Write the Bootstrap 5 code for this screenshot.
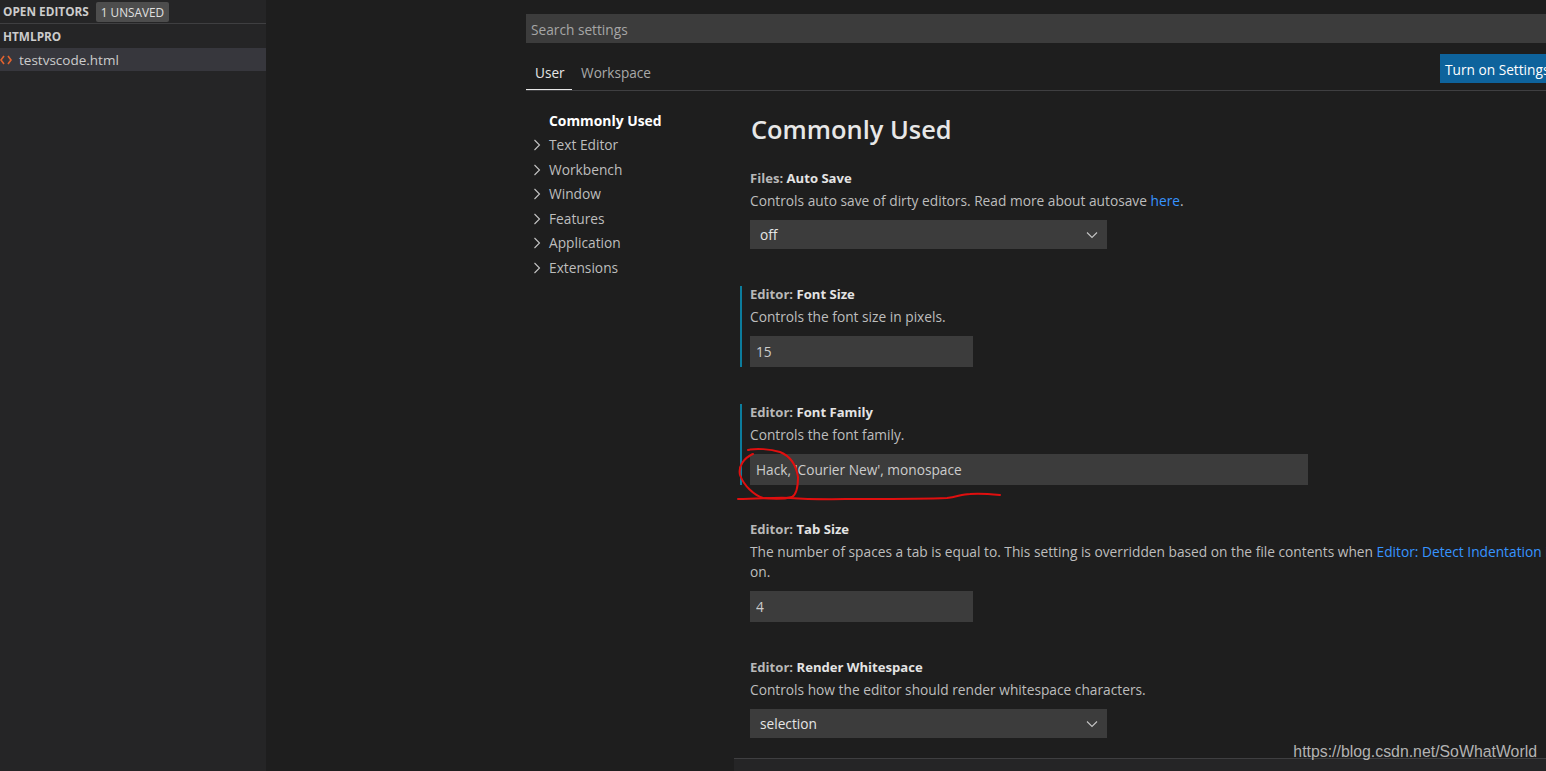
<!DOCTYPE html>
<html lang="en">
<head>
    <meta charset="UTF-8">
    <meta name="viewport" content="width=device-width, initial-scale=1.0">
    <title>Settings - VS Code</title>
    <link href="https://cdn.jsdelivr.net/npm/bootstrap@5.3.1/dist/css/bootstrap.min.css" rel="stylesheet">
    <style>
        html, body { height: 100%; }
        body {
            background-color: #1e1e1e;
            color: #cccccc;
            font-family: "Open Sans", "Liberation Sans", sans-serif;
            font-size: 13.74px;
            overflow: hidden;
        }
        .app-shell { height: 771px; width: 1546px; position: relative; overflow: hidden; }
        .side-bar { width: 266px; background-color: #252526; flex-shrink: 0; }
        .open-head { height: 24px; border-bottom: 1px solid #3f3f41; padding: 0 0 0 3px; font-size: 11.8px; font-weight: 700; color: #cccccc; }
        .unsaved-tag { background-color: #4d4d4d; color: #e0e0e0; border-radius: 2px; padding: 0 5px; margin-left: 7px; font-weight: 400; height: 20px; line-height: 20px; }
        .folder-head { height: 24px; line-height: 25px; padding-left: 3px; font-size: 11.8px; font-weight: 700; color: #cccccc; }
        .file-row { height: 23px; background-color: #37373d; font-size: 13.5px; color: #cccccc; }
        .file-row svg { margin-right: 7px; }
        .file-row span { margin-top: 2px; }
        .settings-pane { padding: 14px 0 0 260px; min-width: 0; flex-grow: 1; }
        .search-box { height: 29px; width: 1100px; background-color: #3c3c3c; color: #a6a6a6; border: 0; border-radius: 0; padding: 1px 5px 0; font-size: 13.7px; }
        .search-box::placeholder { color: #a6a6a6; opacity: 1; }
        .search-box:focus { background-color: #3c3c3c; box-shadow: none; }
        .tab-strip { height: 48px; width: 1100px; border-bottom: 1px solid #3f3f41; position: relative; }
        .tab-strip .nav-link { color: #a9a9a9; padding: 0 7.5px 0 9px; height: 31px; line-height: 27px; background: none; border: 0; font-size: 13.6px; }
        .tab-strip .nav-link.active { color: #e7e7e7; border-bottom: 1px solid #e7e7e7; }
        .sync-btn { background-color: #0e639c; color: #fff; border: 0; border-radius: 0; height: 29px; width: 140px; padding: 3px 0 0 5px; font-size: 13.7px; text-align: left; position: absolute; left: 914px; top: 11px; white-space: nowrap; }
        .body-split { padding-top: 20px; }
        .toc-col { width: 208px; flex-shrink: 0; margin-top: -0.25px; }
        .toc-item { height: 24.5px; line-height: 20px; padding-left: 23px; color: #bdbdbd; position: relative; }
        .toc-item.is-current { color: #ffffff; font-weight: 700; font-size: 13.9px; }
        .toc-item svg { position: absolute; left: 7px; top: 3px; }
        .page-title { font-size: 25.4px; font-weight: 600; color: #e7e7e7; margin: 1px 0 0 17px; height: 58px; line-height: 34px; }
        .setting-item { border-left: 2px solid transparent; padding-left: 8px; margin-left: 6px; margin-bottom: 37px; }
        .setting-item.is-modified { border-left-color: #0c7d9d; }
        .setting-item.gap-tight { margin-bottom: 36px; }
        .setting-label { height: 18px; line-height: 17px; margin-bottom: 3px; font-size: 13.1px; color: #b8b8b8; font-weight: 700; }
        .setting-label b { color: #e4e4e4; font-weight: 700; }
        .setting-desc { line-height: 20px; margin-bottom: 9px; color: #bdbdbd; width: 815px; }
        .setting-desc a { color: #3794ff; text-decoration: none; }
        .setting-field { background-color: #3c3c3c; color: #cccccc; border: 0; border-radius: 0; height: 31px; padding: 0 6px; font-size: 13.7px; display: block; }
        .setting-field:focus { background-color: #3c3c3c; color: #cccccc; box-shadow: none; }
        .field-short { width: 223px; }
        .field-long { width: 558px; }
        .setting-select { background-color: #3c3c3c; color: #e6e6e6; border: 0; border-radius: 0; height: 29px; width: 357px; padding: 2px 0 0 10px; font-size: 13.7px; background-position: right 8px center; background-size: 14px 14px; background-image: url("data:image/svg+xml,%3csvg xmlns='http://www.w3.org/2000/svg' viewBox='0 0 14 14'%3e%3cpath fill='none' stroke='%23c5c5c5' stroke-width='1.1' d='M2 4.5l5 5 5-5'/%3e%3c/svg%3e"); }
        .setting-select:focus { background-color: #3c3c3c; color: #e6e6e6; box-shadow: none; }
        .foot-strip { position: absolute; left: 734px; right: 0; top: 758px; height: 13px; background-color: #252526; border-top: 1px solid #3f3f41; }
        .mark-layer { position: absolute; left: 0; top: 0; pointer-events: none; }
        .water-mark { position: absolute; right: 9px; top: 743px; color: #b3b3b3; font-family: "Liberation Sans", Arial, sans-serif; font-size: 15.85px; line-height: 18px; }
    </style>
</head>
<body>
    <div class="app-shell d-flex">
        <aside class="side-bar">
            <div class="open-head d-flex align-items-center">
                <span>OPEN EDITORS</span>
                <span class="unsaved-tag">1 UNSAVED</span>
            </div>
            <div class="folder-head">HTMLPRO</div>
            <div class="file-row d-flex align-items-center">
                <svg width="12" height="10" viewBox="0 0 12 10"><path fill="none" stroke="#e2632f" stroke-width="1.6" d="M4 1L1 5l3 4M8 1l3 4-3 4"/></svg>
                <span>testvscode.html</span>
            </div>
        </aside>
        <main class="settings-pane">
            <input class="form-control search-box" type="text" placeholder="Search settings">
            <div class="tab-strip d-flex align-items-end">
                <ul class="nav">
                    <li class="nav-item"><a class="nav-link active" href="#">User</a></li>
                    <li class="nav-item"><a class="nav-link" href="#">Workspace</a></li>
                </ul>
                <button class="btn sync-btn" type="button">Turn on Settings Sync</button>
            </div>
            <div class="body-split d-flex">
                <nav class="toc-col">
                    <div class="toc-item is-current">Commonly Used</div>
                    <div class="toc-item"><svg width="9" height="14" viewBox="0 0 9 14"><path fill="none" stroke="#c5c5c5" stroke-width="1.1" d="M1.5 2l5 5-5 5"/></svg>Text Editor</div>
                    <div class="toc-item"><svg width="9" height="14" viewBox="0 0 9 14"><path fill="none" stroke="#c5c5c5" stroke-width="1.1" d="M1.5 2l5 5-5 5"/></svg>Workbench</div>
                    <div class="toc-item"><svg width="9" height="14" viewBox="0 0 9 14"><path fill="none" stroke="#c5c5c5" stroke-width="1.1" d="M1.5 2l5 5-5 5"/></svg>Window</div>
                    <div class="toc-item"><svg width="9" height="14" viewBox="0 0 9 14"><path fill="none" stroke="#c5c5c5" stroke-width="1.1" d="M1.5 2l5 5-5 5"/></svg>Features</div>
                    <div class="toc-item"><svg width="9" height="14" viewBox="0 0 9 14"><path fill="none" stroke="#c5c5c5" stroke-width="1.1" d="M1.5 2l5 5-5 5"/></svg>Application</div>
                    <div class="toc-item"><svg width="9" height="14" viewBox="0 0 9 14"><path fill="none" stroke="#c5c5c5" stroke-width="1.1" d="M1.5 2l5 5-5 5"/></svg>Extensions</div>
                </nav>
                <section class="flex-grow-1">
                    <h2 class="page-title">Commonly Used</h2>
                    <div class="setting-item">
                        <div class="setting-label">Files: <b>Auto Save</b></div>
                        <div class="setting-desc">Controls auto save of dirty editors. Read more about autosave <a href="#">here</a>.</div>
                        <select class="form-select setting-select"><option>off</option></select>
                    </div>
                    <div class="setting-item is-modified">
                        <div class="setting-label">Editor: <b>Font Size</b></div>
                        <div class="setting-desc">Controls the font size in pixels.</div>
                        <input class="form-control setting-field field-short" type="text" value="15">
                    </div>
                    <div class="setting-item is-modified gap-tight">
                        <div class="setting-label">Editor: <b>Font Family</b></div>
                        <div class="setting-desc">Controls the font family.</div>
                        <input class="form-control setting-field field-long" type="text" value="Hack, 'Courier New', monospace">
                    </div>
                    <div class="setting-item">
                        <div class="setting-label">Editor: <b>Tab Size</b></div>
                        <div class="setting-desc">The number of spaces a tab is equal to. This setting is overridden based on the file contents when <a href="#">Editor: Detect Indentation</a> is on.</div>
                        <input class="form-control setting-field field-short" type="text" value="4">
                    </div>
                    <div class="setting-item">
                        <div class="setting-label">Editor: <b>Render Whitespace</b></div>
                        <div class="setting-desc">Controls how the editor should render whitespace characters.</div>
                        <select class="form-select setting-select"><option>selection</option></select>
                    </div>
                </section>
            </div>
        </main>
        <div class="foot-strip"></div>
        <svg class="mark-layer" width="1546" height="771" viewBox="0 0 1546 771">
            <path fill="none" stroke="#e00f0f" stroke-width="2" stroke-linecap="round" d="M748 450C756 448 770 449 780 452C790 456 796 464 798 477C798 487 797 494 792 497C785 499 772 499 763 498C754 495 744 486 740 475C738 466 744 458 753 454"/>
            <path fill="none" stroke="#e00f0f" stroke-width="2" stroke-linecap="round" d="M738 499C760 499 775 497 790 498C815 500 840 499 863 499C890 499 925 499 947 498C957 497 962 494 970 494C980 493 990 494 1000 495"/>
        </svg>
        <div class="water-mark">https://blog.csdn.net/SoWhatWorld</div>
    </div>
    <script src="https://cdn.jsdelivr.net/npm/bootstrap@5.3.1/dist/js/bootstrap.bundle.min.js"></script>
</body>
</html>
